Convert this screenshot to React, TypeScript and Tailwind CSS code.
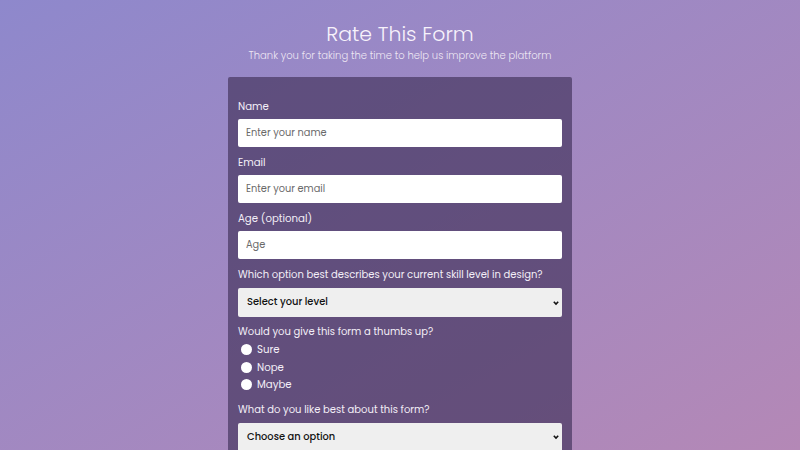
import React from "react";

const font = "font-['Poppins','Open_Sans','Noto_Sans',sans-serif]";

function Field({ label, placeholder, type = "text" }: { label: string; placeholder: string; type?: string }) {
  return (
    <div className="mb-[8px]">
      <label className="block h-[16px] text-[10.2px] leading-[16px] text-[#f3eef7] mb-[4px]">{label}</label>
      <input
        type={type}
        placeholder={placeholder}
        className="block w-full h-[28px] rounded-[2px] bg-white px-[8px] text-[9.8px] text-[#333] placeholder:text-[#6a6a6a] outline-none"
      />
    </div>
  );
}

function SelectField({ label, value }: { label: string; value: string }) {
  return (
    <div className="mb-[7px]">
      <label className="block h-[16px] text-[10px] leading-[16px] text-[#f3eef7] mb-[5px]">{label}</label>
      <div className="relative h-[29px] rounded-[2px] bg-[#efefef] flex items-center px-[9px] text-[9.9px] font-medium text-[#111]">
        {value}
        <svg className="absolute right-[2px] top-1/2 -translate-y-1/2" width="8" height="8" viewBox="0 0 8 8">
          <path d="M1.8 2.8 L4 5 L6.2 2.8" fill="none" stroke="#111" strokeWidth="1.6" />
        </svg>
      </div>
    </div>
  );
}

export default function App() {
  const options = ["Sure", "Nope", "Maybe"];
  return (
    <div className={`min-h-screen h-[450px] overflow-hidden bg-linear-to-br from-[#8e88cc] to-[#b488b6] ${font}`}>
      <div className="pt-[20px] text-center text-white">
        <h1 className="text-[20.5px] leading-[28px] font-light text-[#f7f2fb]">Rate This Form</h1>
        <p className="text-[10px] leading-[14px] font-light text-[#ede6f3] mt-[1px]">
          Thank you for taking the time to help us improve the platform
        </p>
      </div>
      <div className="mx-auto mt-[14px] w-[344px] rounded-t-[2px] bg-[#46365f]/70 px-[10px] pt-[22px] pb-6">
        <Field label="Name" placeholder="Enter your name" />
        <Field label="Email" placeholder="Enter your email" type="email" />
        <Field label="Age (optional)" placeholder="Age" type="number" />
        <SelectField label="Which option best describes your current skill level in design?" value="Select your level" />
        <div className="mb-[8px]">
          <p className="h-[16px] text-[10px] leading-[16px] text-[#f3eef7] mb-[1px]">Would you give this form a thumbs up?</p>
          {options.map((o) => (
            <label key={o} className="flex items-center h-[17.5px] pl-[3px] text-[10.2px] text-[#f3eef7]">
              <span className="inline-block w-[11px] h-[11px] rounded-full bg-white mr-[5px]" />
              {o}
            </label>
          ))}
        </div>
        <SelectField label="What do you like best about this form?" value="Choose an option" />
      </div>
    </div>
  );
}
